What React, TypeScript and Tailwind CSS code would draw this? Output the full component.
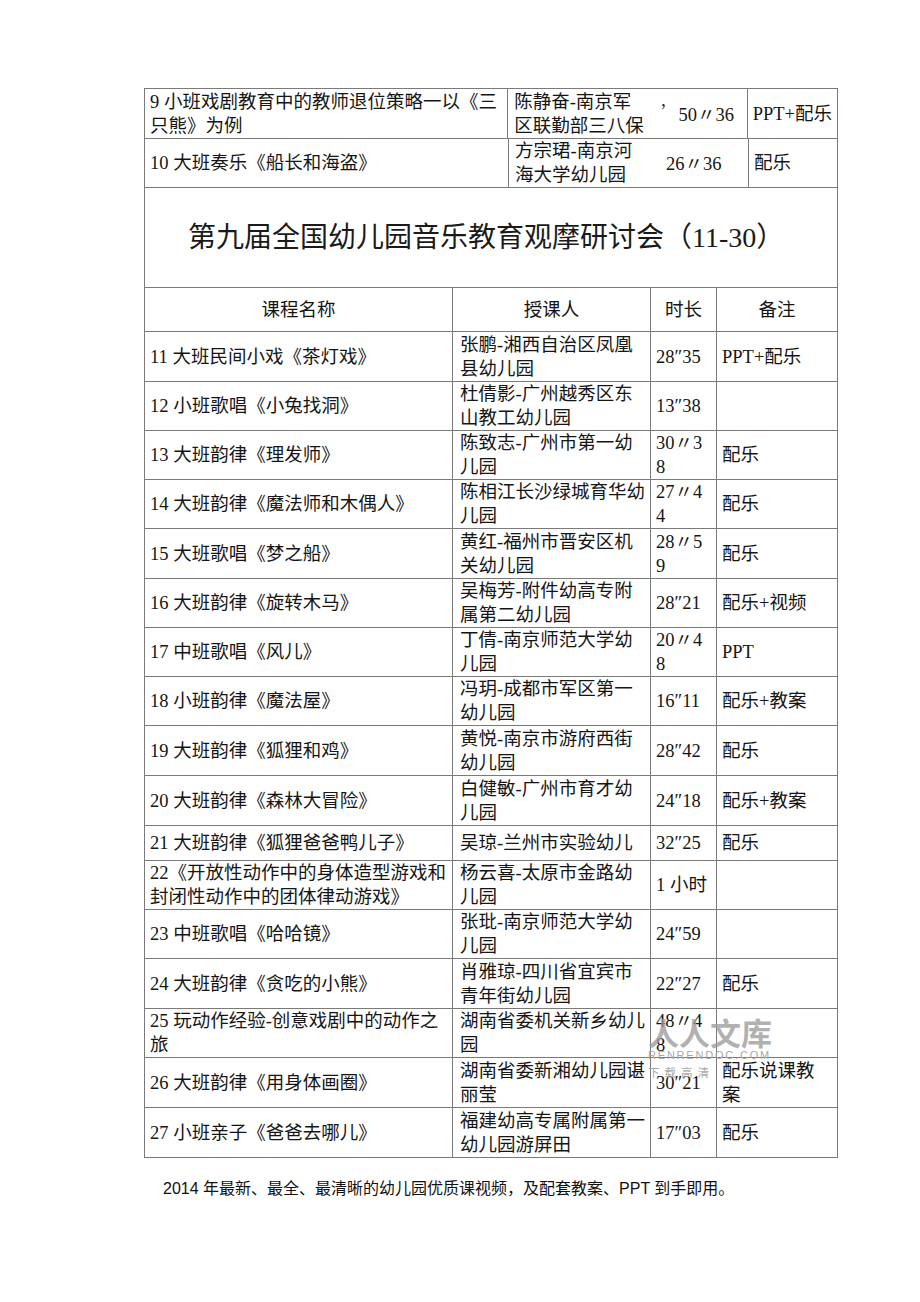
import type { ReactNode } from "react";

type Row = {
  name: string[];
  teacher: string[];
  time: string[];
  note: string[];
  h: string;
};

const rows: Row[] = [
  { name: ["11 大班民间小戏《茶灯戏》"], teacher: ["张鹏-湘西自治区凤凰", "县幼儿园"], time: ["28″35"], note: ["PPT+配乐"], h: "h-[50px]" },
  { name: ["12 小班歌唱《小兔找洞》"], teacher: ["杜倩影-广州越秀区东", "山教工幼儿园"], time: ["13″38"], note: [], h: "h-[49px]" },
  { name: ["13 大班韵律《理发师》"], teacher: ["陈致志-广州市第一幼", "儿园"], time: ["30〃3", "8"], note: ["配乐"], h: "h-[49px]" },
  { name: ["14 大班韵律《魔法师和木偶人》"], teacher: ["陈相江长沙绿城育华幼", "儿园"], time: ["27〃4", "4"], note: ["配乐"], h: "h-[49px]" },
  { name: ["15 大班歌唱《梦之船》"], teacher: ["黄红-福州市晋安区机", "关幼儿园"], time: ["28〃5", "9"], note: ["配乐"], h: "h-[50px]" },
  { name: ["16 大班韵律《旋转木马》"], teacher: ["吴梅芳-附件幼高专附", "属第二幼儿园"], time: ["28″21"], note: ["配乐+视频"], h: "h-[49px]" },
  { name: ["17 中班歌唱《风儿》"], teacher: ["丁倩-南京师范大学幼", "儿园"], time: ["20〃4", "8"], note: ["PPT"], h: "h-[49px]" },
  { name: ["18 小班韵律《魔法屋》"], teacher: ["冯玥-成都市军区第一", "幼儿园"], time: ["16″11"], note: ["配乐+教案"], h: "h-[49px]" },
  { name: ["19 大班韵律《狐狸和鸡》"], teacher: ["黄悦-南京市游府西街", "幼儿园"], time: ["28″42"], note: ["配乐"], h: "h-[50px]" },
  { name: ["20 大班韵律《森林大冒险》"], teacher: ["白健敏-广州市育才幼", "儿园"], time: ["24″18"], note: ["配乐+教案"], h: "h-[50px]" },
  { name: ["21 大班韵律《狐狸爸爸鸭儿子》"], teacher: ["吴琼-兰州市实验幼儿"], time: ["32″25"], note: ["配乐"], h: "h-[35px]" },
  { name: ["22《开放性动作中的身体造型游戏和", "封闭性动作中的团体律动游戏》"], teacher: ["杨云喜-太原市金路幼", "儿园"], time: ["1 小时"], note: [], h: "h-[49px]" },
  { name: ["23 中班歌唱《哈哈镜》"], teacher: ["张玭-南京师范大学幼", "儿园"], time: ["24″59"], note: [], h: "h-[49px]" },
  { name: ["24 大班韵律《贪吃的小熊》"], teacher: ["肖雅琼-四川省宜宾市", "青年街幼儿园"], time: ["22″27"], note: ["配乐"], h: "h-[50px]" },
  { name: ["25 玩动作经验-创意戏剧中的动作之", "旅"], teacher: ["湖南省委机关新乡幼儿", "园"], time: ["48〃4", "8"], note: [], h: "h-[49px]" },
  { name: ["26 大班韵律《用身体画圈》"], teacher: ["湖南省委新湘幼儿园谌", "丽莹"], time: ["30″21"], note: ["配乐说课教", "案"], h: "h-[50px]" },
  { name: ["27 小班亲子《爸爸去哪儿》"], teacher: ["福建幼高专属附属第一", "幼儿园游屏田"], time: ["17″03"], note: ["配乐"], h: "h-[50px]" },
];

function Lines({ lines }: { lines: string[] }) {
  return (
    <div>
      {lines.map((l, i) => (
        <div key={i} className="whitespace-nowrap">
          {l}
        </div>
      ))}
    </div>
  );
}

function Cell({ w, last, children }: { w: string; last?: boolean; children?: ReactNode }) {
  return (
    <div
      className={`flex h-full items-center whitespace-nowrap px-[5px] ${w} ${
        last ? "flex-1" : "border-r border-[#7a7a7a]"
      }`}
    >
      {children}
    </div>
  );
}

function Watermark() {
  return (
    <div className="pointer-events-none absolute left-[648px] top-[1014px] flex select-none flex-col items-start">
      <div className="text-[31px] font-bold leading-[36px] text-[#9c9c9c]/80 [font-family:'Noto_Sans_CJK_SC',sans-serif]">
        人人文库
      </div>
      <div className="-mt-[1px] text-[11px] leading-[12px] tracking-[1.8px] text-[#a8a8a8] [font-family:'Liberation_Sans',sans-serif]">
        RENRENDOC.COM
      </div>
      <div className="mt-[5px] text-[11.5px] leading-[12px] tracking-[5px] text-[#a8a8a8] [font-family:'Noto_Sans_CJK_SC',sans-serif]">
        下载高清
      </div>
    </div>
  );
}

export default function App() {
  return (
    <div className="relative min-h-[1302px] w-[920px] bg-white pt-[88px] text-[18.5px] leading-[24px] text-[#151515] [font-family:'Liberation_Serif','Noto_Sans_CJK_SC',serif]">
      <div className="ml-[144px] w-[694px] border-l border-r border-t border-[#7a7a7a]">
        {/* rows 9-10 carried over from the previous page */}
        <div className="flex h-[50px] border-b border-[#7a7a7a]">
          <Cell w="w-[364px]">
            <Lines lines={["9 小班戏剧教育中的教师退位策略一以《三", "只熊》为例"]} />
          </Cell>
          <div className="flex h-full w-[240px] items-center border-r border-[#7a7a7a] pl-[6px]">
            <div className="w-[146px]">
              <Lines lines={["陈静奋-南京军", "区联勤部三八保"]} />
            </div>
            <span className="mb-[6px]">’</span>
            <span className="ml-[12px] mt-[2px]">50〃36</span>
          </div>
          <Cell w="" last>
            PPT+配乐
          </Cell>
        </div>
        <div className="flex h-[49px] border-b border-[#7a7a7a]">
          <Cell w="w-[364px]">10 大班奏乐《船长和海盗》</Cell>
          <div className="flex h-full w-[240px] items-center border-r border-[#7a7a7a] pl-[6px]">
            <div className="w-[151px]">
              <Lines lines={["方宗珺-南京河", "海大学幼儿园"]} />
            </div>
            <span className="mt-[2px]">26〃36</span>
          </div>
          <Cell w="" last>
            配乐
          </Cell>
        </div>

        {/* title */}
        <div className="flex h-[100px] items-center border-b border-[#7a7a7a] pl-[43px] text-[28px] leading-[32px] text-[#1a1a1a]">
          第九届全国幼儿园音乐教育观摩研讨会（11-30）
        </div>

        {/* header */}
        <div className="flex h-[44px] border-b border-[#7a7a7a] text-center">
          <div className="flex h-full w-[308px] items-center justify-center border-r border-[#7a7a7a]">课程名称</div>
          <div className="flex h-full w-[198px] items-center justify-center border-r border-[#7a7a7a]">授课人</div>
          <div className="flex h-full w-[66px] items-center justify-center border-r border-[#7a7a7a]">时长</div>
          <div className="flex h-full flex-1 items-center justify-center">备注</div>
        </div>

        {rows.map((r, i) => (
          <div key={i} className={`flex border-b border-[#7a7a7a] ${r.h}`}>
            <Cell w="w-[308px]">
              <Lines lines={r.name} />
            </Cell>
            <Cell w="w-[198px] pl-[7px]">
              <Lines lines={r.teacher} />
            </Cell>
            <Cell w="w-[66px]">
              <Lines lines={r.time} />
            </Cell>
            <Cell w="" last>
              <Lines lines={r.note} />
            </Cell>
          </div>
        ))}
      </div>

      <p className="ml-[163px] mt-[20px] text-[16px] leading-[22px] text-[#111] [font-family:'Liberation_Sans','Noto_Sans_CJK_SC',sans-serif]">
        2014 年最新、最全、最清晰的幼儿园优质课视频，及配套教案、PPT 到手即用。
      </p>

      <Watermark />
    </div>
  );
}
